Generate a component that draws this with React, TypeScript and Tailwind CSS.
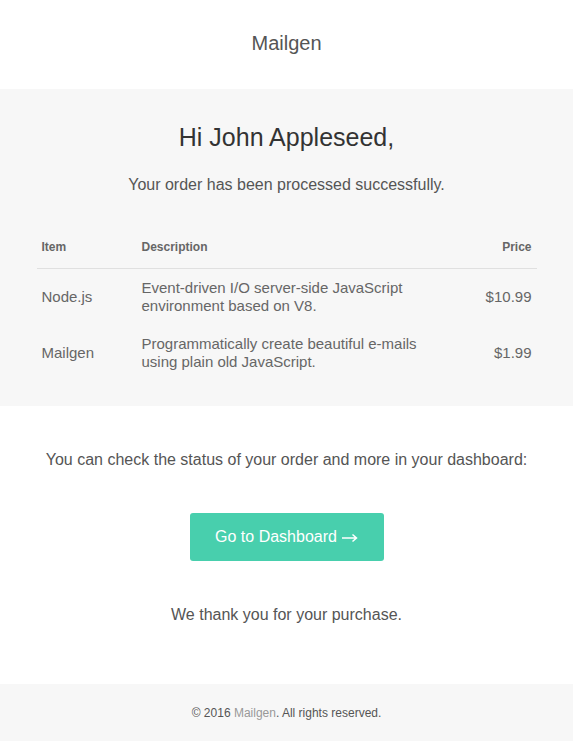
export default function App() {
  const font = { fontFamily: '"Liberation Sans", Arial, Helvetica, sans-serif' };
  const rows = [
    { item: "Node.js", desc: "Event-driven I/O server-side JavaScript environment based on V8.", price: "$10.99" },
    { item: "Mailgen", desc: "Programmatically create beautiful e-mails using plain old JavaScript.", price: "$1.99" },
  ];
  return (
    <div className="w-[573px] min-h-[741px] bg-white font-['Liberation_Sans',Arial,sans-serif]" style={font}>
      <div className="h-[89px] flex items-center justify-center">
        <span className="text-[20px] leading-[24px] text-[#555] pb-[4px]">Mailgen</span>
      </div>
      <div className="bg-[#f7f7f7] pt-[33px] pb-[25px] flex flex-col items-center">
        <h1 className="text-[25px] leading-[30px] text-[#333]">Hi John Appleseed,</h1>
        <p className="mt-[21px] text-[16px] leading-[24px] text-[#555]">Your order has been processed successfully.</p>
        <div className="mt-[42px] w-[500px] grid grid-cols-[100px_300px_1fr]">
          <div className="px-[5px] pb-[13px] text-[12px] leading-[16px] font-bold text-[#666] border-b border-[#e0e0e0]">Item</div>
          <div className="px-[5px] pb-[13px] text-[12px] leading-[16px] font-bold text-[#666] border-b border-[#e0e0e0]">Description</div>
          <div className="px-[5px] pb-[13px] text-[12px] leading-[16px] font-bold text-[#666] text-right border-b border-[#e0e0e0]">Price</div>
          {rows.map((r) => (
            <>
              <div key={r.item + "i"} className="px-[5px] py-[10px] text-[15px] leading-[18px] text-[#666] flex items-center">{r.item}</div>
              <div key={r.item + "d"} className="px-[5px] py-[10px] text-[15px] leading-[18px] text-[#666]">{r.desc}</div>
              <div key={r.item + "p"} className="px-[5px] py-[10px] text-[15px] leading-[18px] text-[#666] flex items-center justify-end">{r.price}</div>
            </>
          ))}
        </div>
      </div>
      <div className="pt-[42px] pb-[57px] flex flex-col items-center">
        <p className="text-[16px] leading-[24px] text-[#555]">You can check the status of your order and more in your dashboard:</p>
        <a className="mt-[41px] h-[48px] w-[194px] flex items-center justify-center gap-[4px] rounded-[3px] bg-[#48cfad] text-white text-[16px] leading-[20px]">
          <span>Go to Dashboard</span>
          <svg width="17" height="10" viewBox="0 0 17 10" className="mt-[2px]" aria-hidden="true">
            <path d="M1 5H15.5M11.5 1.5L15.5 5L11.5 8.5" fill="none" stroke="white" strokeWidth="1.5" />
          </svg>
        </a>
        <p className="mt-[42px] text-[16px] leading-[24px] text-[#555]">We thank you for your purchase.</p>
      </div>
      <div className="bg-[#f7f7f7] pt-[21px] pb-[20px] text-center text-[12px] leading-[16px] text-[#555]">
        © 2016 <span className="text-[#999]">Mailgen</span>. All rights reserved.
      </div>
    </div>
  );
}
